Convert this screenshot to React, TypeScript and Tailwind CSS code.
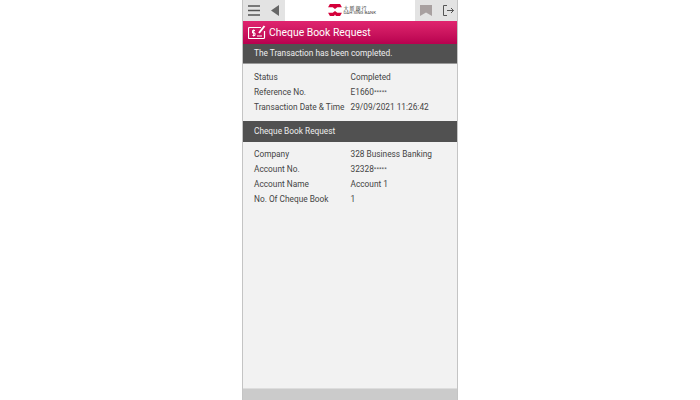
const summary = [
  ['Status', 'Completed'],
  ['Reference No.', 'E1660', '*****'],
  ['Transaction Date & Time', '29/09/2021 11:26:42'],
]

const details = [
  ['Company', '328 Business Banking'],
  ['Account No.', '32328', '*****'],
  ['Account Name', 'Account 1'],
  ['No. Of Cheque Book', '1'],
]

function Rows({ rows }: { rows: string[][] }) {
  return (
    <div className="flex flex-col">
      {rows.map(([label, value, masked]) => (
        <div key={label} className="flex h-[15px] items-center whitespace-nowrap text-[#444]">
          <span className="w-[96.5px]">{label}</span>
          <span>
            {value}
            {masked && <span className="text-[6px] align-[1px]">{masked}</span>}
          </span>
        </div>
      ))}
    </div>
  )
}

export default function App() {
  return (
    <div className="flex h-[400px] w-[700px] justify-center bg-white font-['Roboto',sans-serif] text-[8.3px]">
      <div className="flex w-[216px] flex-col border-x border-[#c4c4c4] bg-[#f2f2f2]">
        {/* Top bar */}
        <div className="flex h-[21px] bg-[#e3e3e3]">
          <div className="flex w-[42px] items-center gap-[11px] pl-[5px]">
            <svg width="12" height="11" viewBox="0 0 12 11">
              <path d="M0 1h12M0 5.500h12M0 10h12" stroke="#555" strokeWidth="1.600" />
            </svg>
            <svg width="8" height="11" viewBox="0 0 8 11">
              <path d="M8 0v11L0 5.500z" fill="#666" />
            </svg>
          </div>
          <div className="flex flex-1 items-center justify-center gap-[2px] bg-white pb-[1px]">
            <svg width="14" height="12" viewBox="0 0 15 13">
              <path d="M2 0h11l2 3.500H10L7.500 5.500 5 3.500H0zM0 9.500h5l2.500-2 2.500 2h5L13 13H8.500L7.500 11.500 6.500 13H2z" fill="#d4003a" />
            </svg>
            <div className="flex w-[29px] flex-col gap-[1px] leading-[5px]">
              <span className="font-['Noto_Sans_CJK_TC',sans-serif] text-[5px] leading-[5px] tracking-[1px] text-[#333]">大新銀行</span>
              <span className="text-[4.400px] leading-[4px] whitespace-nowrap text-[#444]">DAH SING BANK</span>
            </div>
          </div>
          <div className="flex w-[42px] items-center gap-[11px] pl-[5px]">
            <svg width="12" height="11" viewBox="0 0 12 11">
              <path d="M0 0h12v11L6 7.500 0 11z" fill="#a8a0a0" />
            </svg>
            <svg width="11" height="11" viewBox="0 0 11 11" fill="none" stroke="#555" strokeWidth="1">
              <path d="M4 .5H.5v10H4M4 5.500h6.500M8 3l2.500 2.500L8 8" />
            </svg>
          </div>
        </div>

        {/* Title */}
        <div className="flex h-[23px] items-center gap-[3px] bg-gradient-to-b from-[#e0246f] to-[#b8004f] pl-[5px] text-white">
          <svg width="18" height="15" viewBox="0 0 18 15" fill="none" stroke="#fff">
            <path d="M13 2.500H1.500a1 1 0 0 0-1 1v9a1 1 0 0 0 1 1h14a1 1 0 0 0 1-1V6" strokeWidth="1.200" />
            <path d="M11 8 16.500 1" strokeWidth="2" />
            <path d="M7 5.500H4.500v2.500H7v2.500H4.500M5.700 4.500v7" strokeWidth="1" />
            <path d="M9 11h5" strokeWidth="1" />
          </svg>
          <span className="text-[10.4px]">Cheque Book Request</span>
        </div>

        {/* Result banner */}
        <div className="flex h-[20px] items-center border-b border-[#999] bg-[#515151] pl-[11px] text-[#eee]">
          The Transaction has been completed.
        </div>

        <div className="px-[11px] pt-[6px] pb-[6px]">
          <Rows rows={summary} />
        </div>

        <div className="flex h-[21px] items-center bg-[#515151] pl-[11px] text-[#eee]">
          Cheque Book Request
        </div>

        <div className="flex-1 px-[11px] pt-[5px]">
          <Rows rows={details} />
        </div>

        <div className="h-[12px] border-t border-[#ddd] bg-[#cbcbcb]" />
      </div>
    </div>
  )
}
